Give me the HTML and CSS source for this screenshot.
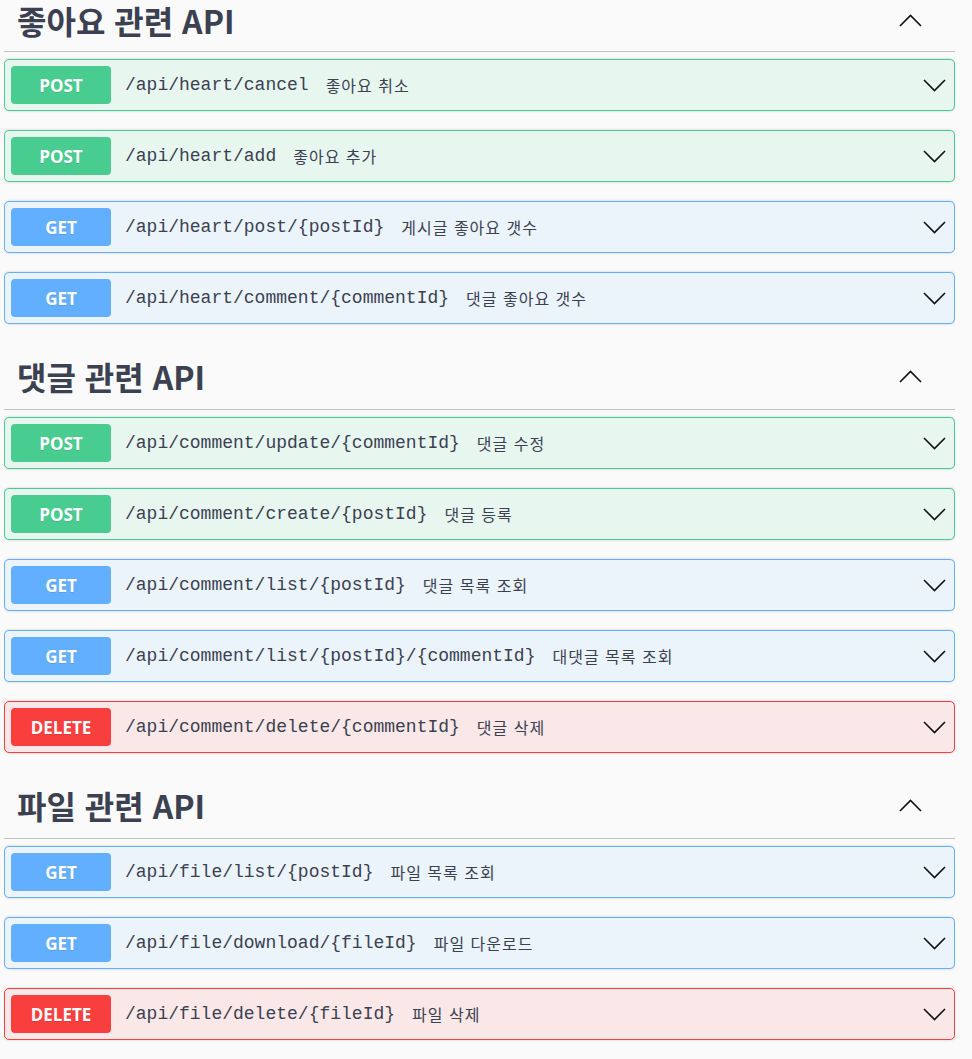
FILE: index.html
```html
<!DOCTYPE html>
<html lang="ko">
<head>
<meta charset="utf-8">
<title>API</title>
<link rel="stylesheet" href="styles.css">
</head>
<body>
<div class="page">

  <section class="tag-section first">
    <div class="tag-header">
      <h3>좋아요 관련 API</h3>
      <svg class="chev-up" width="23" height="13" viewBox="0 0 23 13"><polyline points="1,12 11.5,1.5 22,12"/></svg>
    </div>
    <div class="op post"><span class="method">POST</span><span class="path">/api/heart/cancel</span><span class="desc">좋아요 취소</span><svg class="chev" width="23" height="13" viewBox="0 0 23 13"><polyline points="1,1 11.5,11.5 22,1"/></svg></div>
    <div class="op post"><span class="method">POST</span><span class="path">/api/heart/add</span><span class="desc">좋아요 추가</span><svg class="chev" width="23" height="13" viewBox="0 0 23 13"><polyline points="1,1 11.5,11.5 22,1"/></svg></div>
    <div class="op get"><span class="method">GET</span><span class="path">/api/heart/post/{postId}</span><span class="desc">게시글 좋아요 갯수</span><svg class="chev" width="23" height="13" viewBox="0 0 23 13"><polyline points="1,1 11.5,11.5 22,1"/></svg></div>
    <div class="op get"><span class="method">GET</span><span class="path">/api/heart/comment/{commentId}</span><span class="desc">댓글 좋아요 갯수</span><svg class="chev" width="23" height="13" viewBox="0 0 23 13"><polyline points="1,1 11.5,11.5 22,1"/></svg></div>
  </section>

  <section class="tag-section">
    <div class="tag-header">
      <h3>댓글 관련 API</h3>
      <svg class="chev-up" width="23" height="13" viewBox="0 0 23 13"><polyline points="1,12 11.5,1.5 22,12"/></svg>
    </div>
    <div class="op post"><span class="method">POST</span><span class="path">/api/comment/update/{commentId}</span><span class="desc">댓글 수정</span><svg class="chev" width="23" height="13" viewBox="0 0 23 13"><polyline points="1,1 11.5,11.5 22,1"/></svg></div>
    <div class="op post"><span class="method">POST</span><span class="path">/api/comment/create/{postId}</span><span class="desc">댓글 등록</span><svg class="chev" width="23" height="13" viewBox="0 0 23 13"><polyline points="1,1 11.5,11.5 22,1"/></svg></div>
    <div class="op get"><span class="method">GET</span><span class="path">/api/comment/list/{postId}</span><span class="desc">댓글 목록 조회</span><svg class="chev" width="23" height="13" viewBox="0 0 23 13"><polyline points="1,1 11.5,11.5 22,1"/></svg></div>
    <div class="op get"><span class="method">GET</span><span class="path">/api/comment/list/{postId}/{commentId}</span><span class="desc">대댓글 목록 조회</span><svg class="chev" width="23" height="13" viewBox="0 0 23 13"><polyline points="1,1 11.5,11.5 22,1"/></svg></div>
    <div class="op delete"><span class="method">DELETE</span><span class="path">/api/comment/delete/{commentId}</span><span class="desc">댓글 삭제</span><svg class="chev" width="23" height="13" viewBox="0 0 23 13"><polyline points="1,1 11.5,11.5 22,1"/></svg></div>
  </section>

  <section class="tag-section">
    <div class="tag-header">
      <h3>파일 관련 API</h3>
      <svg class="chev-up" width="23" height="13" viewBox="0 0 23 13"><polyline points="1,12 11.5,1.5 22,12"/></svg>
    </div>
    <div class="op get"><span class="method">GET</span><span class="path">/api/file/list/{postId}</span><span class="desc">파일 목록 조회</span><svg class="chev" width="23" height="13" viewBox="0 0 23 13"><polyline points="1,1 11.5,11.5 22,1"/></svg></div>
    <div class="op get"><span class="method">GET</span><span class="path">/api/file/download/{fileId}</span><span class="desc">파일 다운로드</span><svg class="chev" width="23" height="13" viewBox="0 0 23 13"><polyline points="1,1 11.5,11.5 22,1"/></svg></div>
    <div class="op delete"><span class="method">DELETE</span><span class="path">/api/file/delete/{fileId}</span><span class="desc">파일 삭제</span><svg class="chev" width="23" height="13" viewBox="0 0 23 13"><polyline points="1,1 11.5,11.5 22,1"/></svg></div>
  </section>

</div>
</body>
</html>
```

FILE: styles.css
```css
html, body {
  margin: 0;
  padding: 0;
  background: #fafafa;
  color: #3b4151;
  font-family: "Open Sans", "Noto Sans CJK KR", sans-serif;
}

.page {
  width: 951px;
  margin-left: 4px;
  overflow: hidden;
}

.tag-section {
  display: flex;
  flex-direction: column;
}

.tag-header {
  box-sizing: border-box;
  height: 67px;
  display: flex;
  align-items: center;
  padding: 0 33px 0 13px;
  border-bottom: 1px solid rgba(59, 65, 81, 0.3);
  margin-bottom: 7px;
}

.first .tag-header {
  height: 52px;
  padding-bottom: 11px;
}

.tag-header h3 {
  margin: 0;
  flex: 1;
  font-family: "Noto Sans CJK KR", "Open Sans", sans-serif;
  font-size: 32px;
  font-weight: 700;
  line-height: 40px;
  color: #3b4151;
}

.chev-up, .chev {
  flex: none;
  fill: none;
  stroke: #111;
  stroke-width: 1.6;
}

.op {
  box-sizing: border-box;
  height: 52px;
  display: flex;
  align-items: center;
  padding: 0 8px 0 6px;
  margin-bottom: 19px;
  border: 1px solid;
  border-radius: 5px;
  box-shadow: 0 0 3px rgba(0, 0, 0, 0.19);
}

.op.post {
  background: #e8f6f0;
  border-color: #49cc90;
}
.op.get {
  background: #ebf3fb;
  border-color: #61affe;
}
.op.delete {
  background: #fae7e7;
  border-color: #f93e3e;
}

.method {
  flex: none;
  width: 100px;
  height: 38px;
  border-radius: 4px;
  display: flex;
  align-items: center;
  justify-content: center;
  color: #fff;
  font-family: "Open Sans", sans-serif;
  font-size: 17px;
  font-weight: 700;
  text-shadow: 0 1px 0 rgba(0, 0, 0, 0.1);
}

.post .method { background: #49cc90; }
.get .method { background: #61affe; }
.delete .method { background: #f93e3e; }

.path {
  margin-left: 14px;
  font-family: "Liberation Mono", "Noto Sans CJK KR", monospace;
  font-size: 18px;
  color: #3b4151;
  white-space: nowrap;
}

.desc {
  margin-left: 17px;
  flex: 1;
  font-family: "Noto Sans CJK KR", sans-serif;
  font-size: 16px;
  letter-spacing: 1px;
  color: #3b4151;
  white-space: nowrap;
}
```
